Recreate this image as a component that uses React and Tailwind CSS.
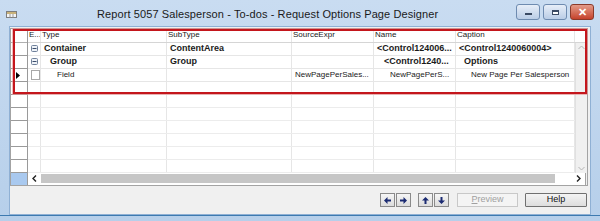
import React from "react";

const cols = [13, 126, 125, 82, 82, 119];

const Minus = () => (
  <svg width="7" height="7" viewBox="0 0 7 7" className="block">
    <rect x="0.5" y="0.5" width="6" height="6" rx="1" fill="#eef2f7" stroke="#6f819b" />
    <line x1="1.5" y1="3.5" x2="5.5" y2="3.5" stroke="#3c4e6c" />
  </svg>
);

const Arrow = ({ dir }) => {
  const rot = { left: 180, right: 0, up: 270, down: 90 }[dir];
  return (
    <svg width="9" height="9" viewBox="0 0 9 9" style={{ transform: `rotate(${rot}deg)` }}>
      <path d="M1 3.5h3.5V1L8 4.5 4.5 8V5.5H1z" fill="#1b2b72" />
    </svg>
  );
};

const Cell = ({ w, children, className = "" }) => (
  <div
    style={{ width: w }}
    className={"h-full shrink-0 border-r border-[#e6e6e6] flex items-center overflow-hidden whitespace-nowrap " + className}
  >
    {children}
  </div>
);

const rows = [
  {
    e: <Minus />,
    type: <span className="pl-[3px] font-bold text-[9px]">Container</span>,
    sub: <span className="pl-[3px] font-bold text-[9px]">ContentArea</span>,
    src: "",
    name: <span className="pl-[3px] font-bold text-[9px]">&lt;Control124006...</span>,
    cap: <span className="pl-[3px] font-bold text-[9px]">&lt;Control1240060004&gt;</span>,
  },
  {
    e: <Minus />,
    type: <span className="pl-[9px] font-bold text-[9px]">Group</span>,
    sub: <span className="pl-[3px] font-bold text-[9px]">Group</span>,
    src: "",
    name: <span className="pl-[10px] font-bold text-[9px]">&lt;Control1240...</span>,
    cap: <span className="pl-[8px] font-bold text-[9px]">Options</span>,
  },
  {
    sel: true,
    e: <div className="w-[9px] h-[10px] border border-[#a8a8a8] bg-white" />,
    type: <span className="pl-[16px]">Field</span>,
    sub: "",
    src: <span className="pl-[3px]">NewPagePerSales...</span>,
    name: <span className="pl-[16px]">NewPagePerS...</span>,
    cap: <span className="pl-[15px]">New Page Per Salesperson</span>,
  },
];

export default function App() {
  const empties = Array.from({ length: 7 });
  return (
    <div
      className="w-[600px] h-[221px] bg-gradient-to-b from-[#c9dcf1] to-[#b6cfea] flex flex-col overflow-hidden"
      style={{ fontFamily: '"Liberation Sans", Arial, sans-serif' }}
    >
      {/* title bar */}
      <div className="h-[26px] flex items-center shrink-0 relative">
        <svg width="11" height="7" viewBox="0 0 11 7" className="ml-[6px] mt-[2px]">
          <rect x="0.5" y="0.5" width="10" height="6" fill="#f4f4f4" stroke="#7e7e7e" />
          <rect x="1" y="1" width="9" height="2" fill="#c9b27a" />
          <line x1="4" y1="3" x2="4" y2="6.5" stroke="#9a9a9a" />
          <line x1="7" y1="3" x2="7" y2="6.5" stroke="#9a9a9a" />
        </svg>
        <div className="ml-[80px] text-[11px] text-[#1a1a1a] tracking-[0.1px] mt-[2px]">
          Report 5057 Salesperson - To-dos - Request Options Page Designer
        </div>
        <div className="ml-auto mr-[6px] flex gap-[3px] self-start mt-[4px]">
          <div className="w-[24px] h-[16px] rounded-[3px] border border-[#6e8bb0] bg-gradient-to-b from-[#e7eef8] to-[#bacde6] flex items-center justify-center">
            <div className="w-[7px] h-[2px] bg-white border border-[#3a4a63] mt-[3px]" />
          </div>
          <div className="w-[24px] h-[16px] rounded-[3px] border border-[#6e8bb0] bg-gradient-to-b from-[#e7eef8] to-[#bacde6] flex items-center justify-center">
            <div className="w-[7px] h-[5px] border border-[#3a4a63] border-t-2 bg-white" />
          </div>
          <div className="w-[24px] h-[16px] rounded-[3px] border border-[#8a3a2a] bg-gradient-to-b from-[#e39a88] to-[#c4412b] flex items-center justify-center text-white font-bold text-[11px] leading-none">
            ✕
          </div>
        </div>
      </div>

      {/* client area */}
      <div className="mx-[9px] h-[189px] bg-[#f0f0f0] border border-[#8fb0d4] flex flex-col shrink-0 text-[8px] text-[#1a1a1a]">
        <div className="relative mt-[1px] w-[578px] h-[158px] border border-[#a3a3a3] flex bg-white">
          {/* row header column */}
          <div className="w-[17px] flex flex-col border-r border-[#9a9a9a] shrink-0">
            <div className="h-[14px] border-b border-[#b0b0b0] bg-white" />
            {[0, 1, 2, ...empties].map((_, i) => (
              <div key={i} className="h-[13px] border-b border-[#9a9a9a] bg-white flex items-center pl-[5px]">
                {i === 2 && (
                  <svg width="4" height="7" viewBox="0 0 4 7">
                    <path d="M0 0L4 3.5L0 7z" fill="#000" />
                  </svg>
                )}
              </div>
            ))}
            <div className="flex-1 bg-[#a9c9ef]" />
          </div>

          {/* data area */}
          <div className="flex-1 flex flex-col">
            <div className="h-[14px] flex border-b border-[#d5d5d5] bg-white">
              <Cell w={cols[0]} className="pl-[1px]">E...</Cell>
              <Cell w={cols[1]} className="pl-[1px]">Type</Cell>
              <Cell w={cols[2]} className="pl-[1px]">SubType</Cell>
              <Cell w={cols[3]} className="pl-[1px]">SourceExpr</Cell>
              <Cell w={cols[4]} className="pl-[1px]">Name</Cell>
              <Cell w={cols[5]} className="pl-[1px]">Caption</Cell>
              <div className="flex-1" />
            </div>
            <div className="flex flex-1">
              <div className="flex flex-col">
                {rows.map((r, i) => (
                  <div key={i} className="h-[13px] flex border-b border-[#e6e6e6]">
                    <Cell w={cols[0]} className="pl-[3px]">{r.e}</Cell>
                    <Cell w={cols[1]}>{r.type}</Cell>
                    <Cell w={cols[2]}>{r.sub}</Cell>
                    <Cell w={cols[3]}>{r.src}</Cell>
                    <Cell w={cols[4]}>{r.name}</Cell>
                    <Cell w={cols[5]}>{r.cap}</Cell>
                  </div>
                ))}
                {empties.map((_, i) => (
                  <div key={i} className="h-[13px] flex border-b border-[#ececec]">
                    {cols.map((w, j) => (
                      <Cell key={j} w={w} />
                    ))}
                  </div>
                ))}
              </div>
              {/* vertical scrollbar */}
              <div className="flex-1 flex flex-col items-center justify-between bg-[#f0f0f0] border-l border-[#e0e0e0] py-[2px]">
                <svg width="7" height="5" viewBox="0 0 7 5"><path d="M0.5 4L3.5 1L6.5 4" fill="none" stroke="#b4b4b4" /></svg>
                <svg width="7" height="5" viewBox="0 0 7 5"><path d="M0.5 1L3.5 4L6.5 1" fill="none" stroke="#b4b4b4" /></svg>
              </div>
            </div>
            {/* horizontal scrollbar */}
            <div className="h-[13px] flex items-center bg-white">
              <div className="w-[13px] flex justify-center">
                <svg width="5" height="7" viewBox="0 0 5 7"><path d="M4 0.5L1 3.5L4 6.5" fill="none" stroke="#222" strokeWidth="1.4" /></svg>
              </div>
              <div className="w-[514px] h-[9px] bg-[#c6c6c6]" />
              <div className="w-[30px] flex justify-end pr-[4px]">
                <svg width="5" height="7" viewBox="0 0 5 7"><path d="M1 0.5L4 3.5L1 6.5" fill="none" stroke="#222" strokeWidth="1.4" /></svg>
              </div>
              <div className="flex-1 h-full bg-[#f0f0f0] border-l border-[#a3a3a3]" />
            </div>
          </div>

          {/* red highlight overlay */}
          <div className="absolute left-[2px] top-[0px] w-[574px] h-[65px] border-2 border-[#c4161c] shadow-[0_0_0_1px_rgba(230,140,140,0.6)] pointer-events-none" />
        </div>

        {/* bottom buttons */}
        <div className="flex justify-end items-center mt-[7px] pr-[3px] text-[9px]">
          <div className="flex gap-[1px]">
            <div className="w-[15px] h-[14px] border border-[#8a8a8a] bg-gradient-to-b from-[#f6f6f6] to-[#dcdcdc] flex items-center justify-center"><Arrow dir="left" /></div>
            <div className="w-[15px] h-[14px] border border-[#8a8a8a] bg-gradient-to-b from-[#f6f6f6] to-[#dcdcdc] flex items-center justify-center"><Arrow dir="right" /></div>
          </div>
          <div className="flex gap-[1px] ml-[7px]">
            <div className="w-[15px] h-[14px] border border-[#8a8a8a] bg-gradient-to-b from-[#f6f6f6] to-[#dcdcdc] flex items-center justify-center"><Arrow dir="up" /></div>
            <div className="w-[15px] h-[14px] border border-[#8a8a8a] bg-gradient-to-b from-[#f6f6f6] to-[#dcdcdc] flex items-center justify-center"><Arrow dir="down" /></div>
          </div>
          <div className="ml-[8px] w-[61px] h-[14px] border border-[#c8c8c8] bg-[#f4f4f4] flex items-center justify-center text-[#a0a0a0]">
            <span><u>P</u>review</span>
          </div>
          <div className="ml-[7px] w-[62px] h-[14px] border border-[#707070] rounded-[1px] bg-gradient-to-b from-[#f4f4f4] to-[#dddddd] flex items-center justify-center text-[#111]">
            Help
          </div>
        </div>
      </div>
      <div className="flex-1 border-t border-[#3d7ab0]" />
    </div>
  );
}
